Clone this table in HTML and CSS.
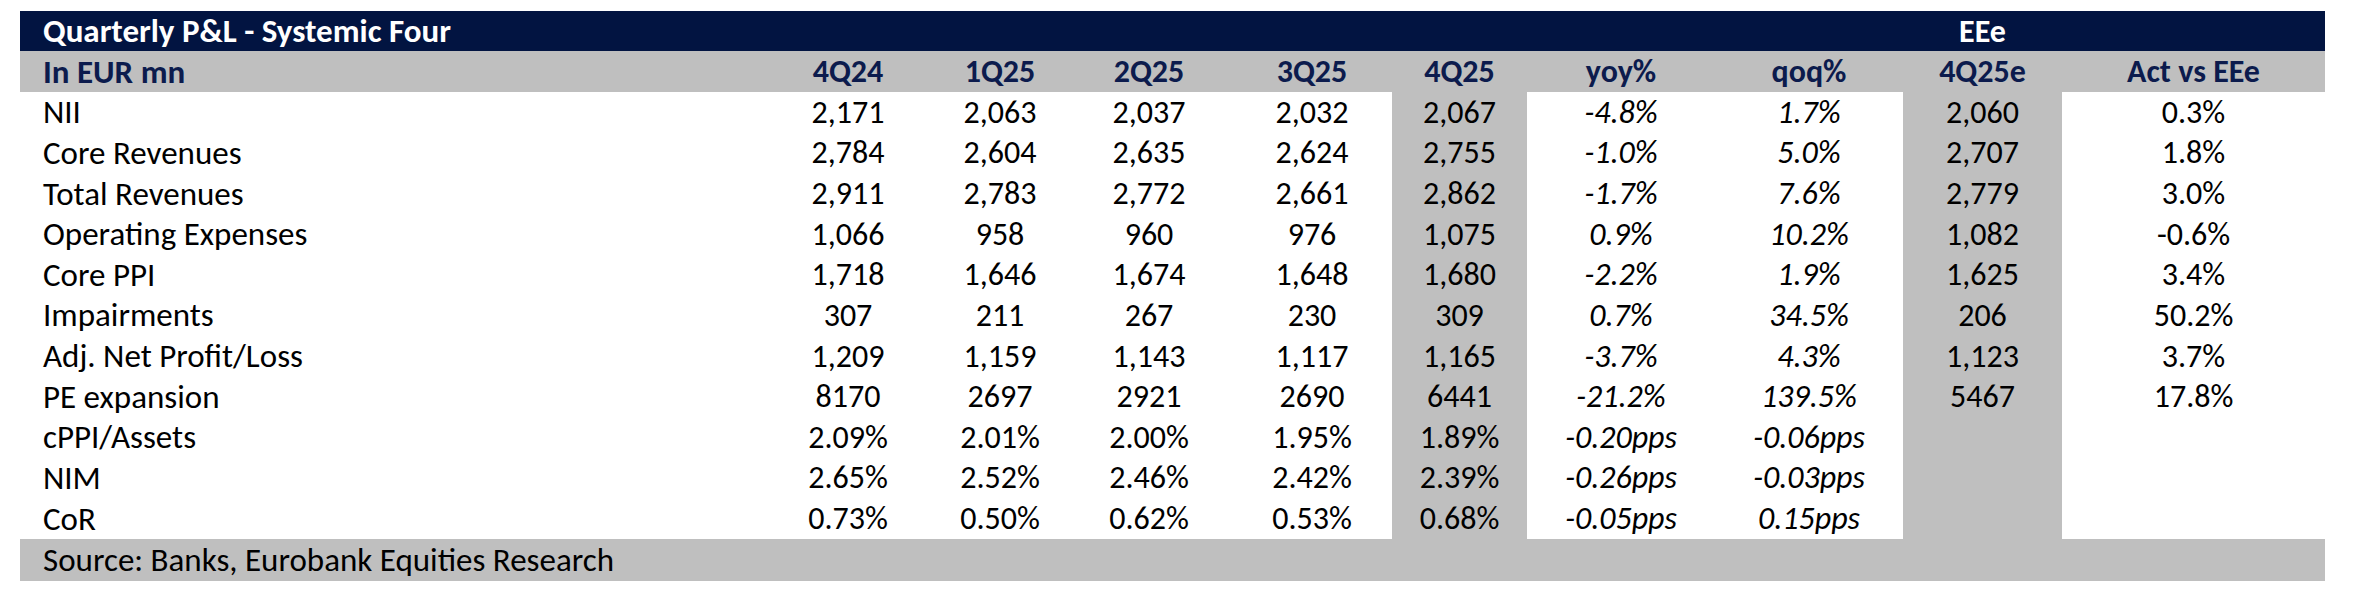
FILE: index.html
```html
<!DOCTYPE html>
<html>
<head>
<meta charset="utf-8">
<link rel="stylesheet" href="styles.css">
</head>
<body>
<div class="table">
  <div class="row title">
    <div class="cell lbl span8">Quarterly P&amp;L - Systemic Four</div>
    <div class="cell">EEe</div>
    <div class="cell"></div>
  </div>
  <div class="row head">
    <div class="cell lbl">In EUR mn</div>
    <div class="cell">4Q24</div>
    <div class="cell">1Q25</div>
    <div class="cell">2Q25</div>
    <div class="cell">3Q25</div>
    <div class="cell">4Q25</div>
    <div class="cell">yoy%</div>
    <div class="cell">qoq%</div>
    <div class="cell">4Q25e</div>
    <div class="cell">Act vs EEe</div>
  </div>
  <div class="row data">
    <div class="cell lbl">NII</div>
    <div class="cell">2,171</div><div class="cell">2,063</div><div class="cell">2,037</div><div class="cell">2,032</div>
    <div class="cell gray">2,067</div><div class="cell it">-4.8%</div><div class="cell it">1.7%</div>
    <div class="cell gray">2,060</div><div class="cell">0.3%</div>
  </div>
  <div class="row data">
    <div class="cell lbl">Core Revenues</div>
    <div class="cell">2,784</div><div class="cell">2,604</div><div class="cell">2,635</div><div class="cell">2,624</div>
    <div class="cell gray">2,755</div><div class="cell it">-1.0%</div><div class="cell it">5.0%</div>
    <div class="cell gray">2,707</div><div class="cell">1.8%</div>
  </div>
  <div class="row data">
    <div class="cell lbl">Total Revenues</div>
    <div class="cell">2,911</div><div class="cell">2,783</div><div class="cell">2,772</div><div class="cell">2,661</div>
    <div class="cell gray">2,862</div><div class="cell it">-1.7%</div><div class="cell it">7.6%</div>
    <div class="cell gray">2,779</div><div class="cell">3.0%</div>
  </div>
  <div class="row data">
    <div class="cell lbl">Operating Expenses</div>
    <div class="cell">1,066</div><div class="cell">958</div><div class="cell">960</div><div class="cell">976</div>
    <div class="cell gray">1,075</div><div class="cell it">0.9%</div><div class="cell it">10.2%</div>
    <div class="cell gray">1,082</div><div class="cell">-0.6%</div>
  </div>
  <div class="row data">
    <div class="cell lbl">Core PPI</div>
    <div class="cell">1,718</div><div class="cell">1,646</div><div class="cell">1,674</div><div class="cell">1,648</div>
    <div class="cell gray">1,680</div><div class="cell it">-2.2%</div><div class="cell it">1.9%</div>
    <div class="cell gray">1,625</div><div class="cell">3.4%</div>
  </div>
  <div class="row data">
    <div class="cell lbl">Impairments</div>
    <div class="cell">307</div><div class="cell">211</div><div class="cell">267</div><div class="cell">230</div>
    <div class="cell gray">309</div><div class="cell it">0.7%</div><div class="cell it">34.5%</div>
    <div class="cell gray">206</div><div class="cell">50.2%</div>
  </div>
  <div class="row data">
    <div class="cell lbl">Adj. Net Profit/Loss</div>
    <div class="cell">1,209</div><div class="cell">1,159</div><div class="cell">1,143</div><div class="cell">1,117</div>
    <div class="cell gray">1,165</div><div class="cell it">-3.7%</div><div class="cell it">4.3%</div>
    <div class="cell gray">1,123</div><div class="cell">3.7%</div>
  </div>
  <div class="row data">
    <div class="cell lbl">PE expansion</div>
    <div class="cell">8170</div><div class="cell">2697</div><div class="cell">2921</div><div class="cell">2690</div>
    <div class="cell gray">6441</div><div class="cell it">-21.2%</div><div class="cell it">139.5%</div>
    <div class="cell gray">5467</div><div class="cell">17.8%</div>
  </div>
  <div class="row data">
    <div class="cell lbl">cPPI/Assets</div>
    <div class="cell">2.09%</div><div class="cell">2.01%</div><div class="cell">2.00%</div><div class="cell">1.95%</div>
    <div class="cell gray">1.89%</div><div class="cell it">-0.20pps</div><div class="cell it">-0.06pps</div>
    <div class="cell gray"></div><div class="cell"></div>
  </div>
  <div class="row data">
    <div class="cell lbl">NIM</div>
    <div class="cell">2.65%</div><div class="cell">2.52%</div><div class="cell">2.46%</div><div class="cell">2.42%</div>
    <div class="cell gray">2.39%</div><div class="cell it">-0.26pps</div><div class="cell it">-0.03pps</div>
    <div class="cell gray"></div><div class="cell"></div>
  </div>
  <div class="row data">
    <div class="cell lbl">CoR</div>
    <div class="cell">0.73%</div><div class="cell">0.50%</div><div class="cell">0.62%</div><div class="cell">0.53%</div>
    <div class="cell gray">0.68%</div><div class="cell it">-0.05pps</div><div class="cell it">0.15pps</div>
    <div class="cell gray"></div><div class="cell"></div>
  </div>
  <div class="row foot">
    <div class="cell lbl">Source: Banks, Eurobank Equities Research</div>
  </div>
</div>
</body>
</html>
```
FILE: styles.css
```css
html, body {
  margin: 0;
  padding: 0;
  background: #ffffff;
}
body {
  font-family: Carlito, Calibri, Lato, "Open Sans", sans-serif;
  font-size: 32px;
  color: #000000;
}
.table {
  margin: 11px 0 0 20px;
  width: 2305px;
}
.row {
  display: grid;
  grid-template-columns: 742px 172px 132px 166px 160px 135px 188px 188px 159px 263px;
  height: 40.64px;
}
.cell {
  display: flex;
  align-items: center;
  justify-content: center;
  white-space: nowrap;
  line-height: 1;
  padding-top: 1px;
}
.cell.lbl {
  justify-content: flex-start;
  padding-left: 23px;
  font-size: 33px;
}
.span8 {
  grid-column: 1 / span 8;
}
.title {
  height: 40px;
  background: #021441;
  color: #ffffff;
  font-weight: 700;
}
.head {
  height: 41px;
  background: #bfbfbf;
  color: #0c1b4d;
  font-weight: 700;
}
.gray {
  background: #bfbfbf;
}
.it {
  font-style: italic;
}
.foot {
  display: flex;
  height: 42px;
  background: #bfbfbf;
}
```
